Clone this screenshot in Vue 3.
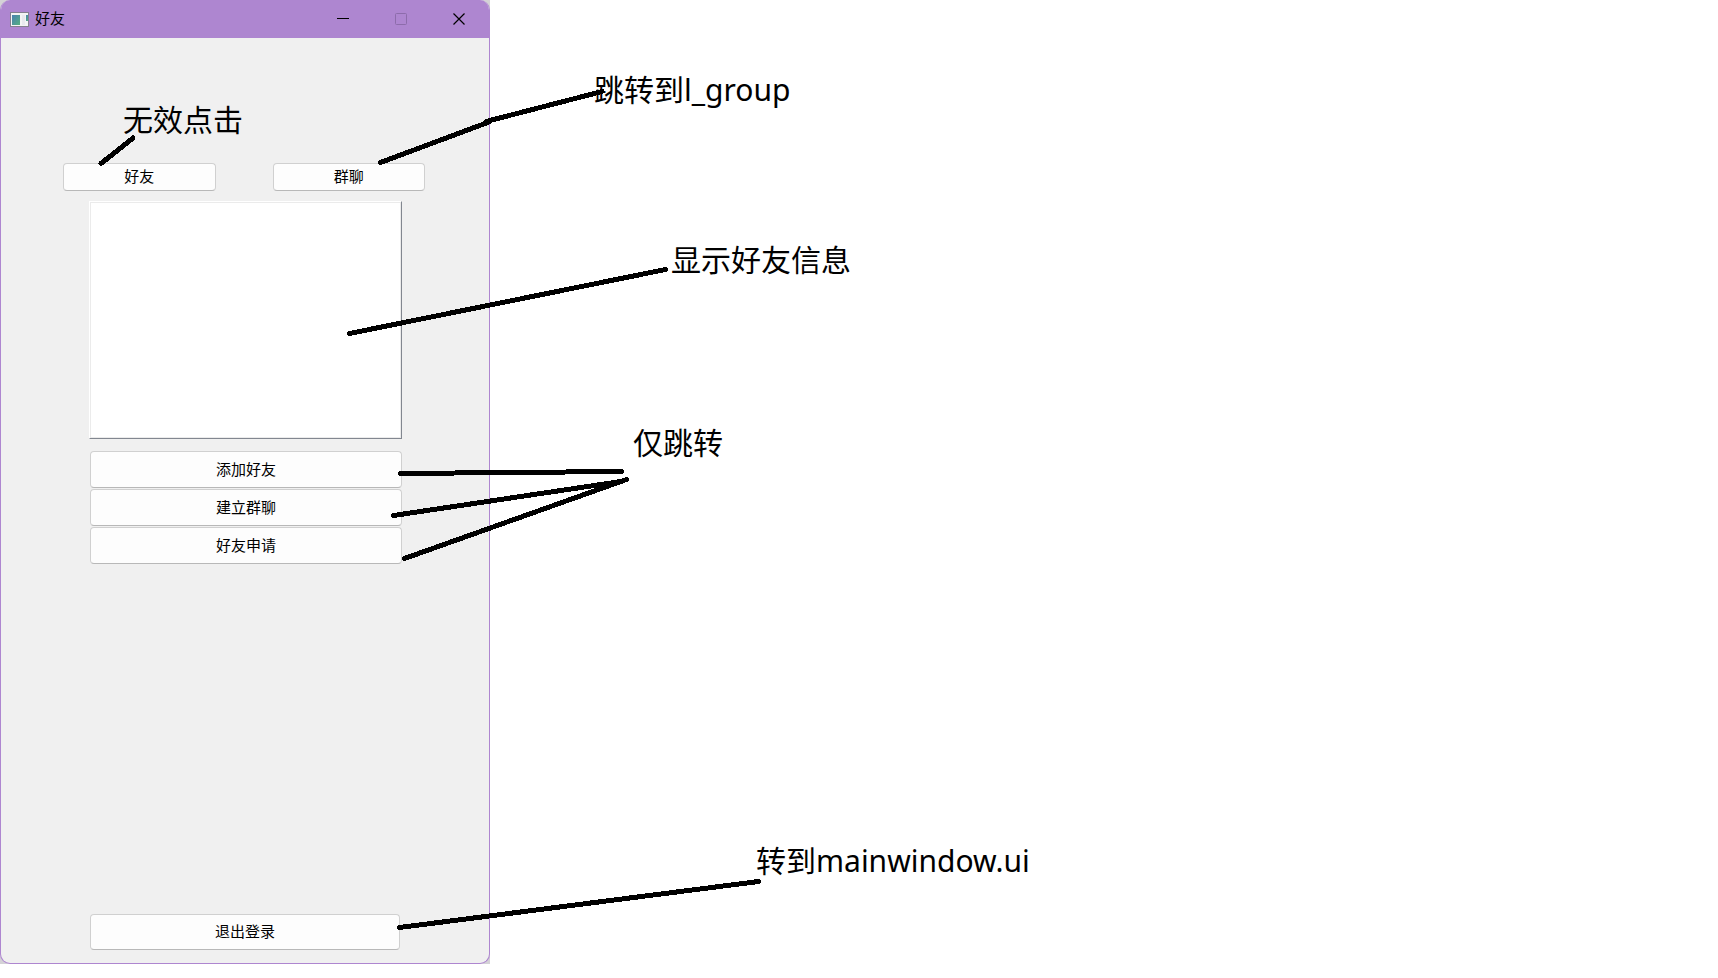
<script setup>
const notes = [
  { text: '无效点击', x: 123, y: 98 },
  { text: '跳转到l_group', x: 594, y: 68 },
  { text: '显示好友信息', x: 671, y: 238 },
  { text: '仅跳转', x: 633, y: 421 },
  { text: '转到mainwindow.ui', x: 756, y: 839 },
]

const strokes = [
  'M101 163.5 L133 138',
  'M380.5 162.5 L489 122',
  'M486 121.5 L602 91.5',
  'M349.5 333.5 L665.5 269.5',
  'M400.5 473.5 L621.5 471.5',
  'M393.5 515.5 L621 481.5',
  'M404.5 558.5 L626.5 479.5',
  'M399.5 927.5 L758.5 881.5',
]

const actions = ['添加好友', '建立群聊', '好友申请']
</script>

<template>
  <main class="board">
    <div class="backdrop">
      <section class="window">
        <header class="titlebar">
          <svg class="app-icon" viewBox="0 0 19 15" aria-hidden="true">
            <defs>
              <linearGradient id="pane" x1="0" y1="0" x2="1" y2="1">
                <stop offset="0" stop-color="#4a80b0" />
                <stop offset="1" stop-color="#55b080" />
              </linearGradient>
            </defs>
            <rect x="0.5" y="0.5" width="18" height="14" fill="#f4f4f4" stroke="#85808f" />
            <rect x="2" y="3" width="8" height="10" fill="url(#pane)" />
            <rect x="12" y="3" width="3" height="10" fill="#e9e9ee" />
            <rect x="16" y="3" width="2" height="6" fill="url(#pane)" />
          </svg>
          <h1 class="title">好友</h1>
          <button class="control" type="button" aria-label="最小化">
            <svg viewBox="0 0 12 12"><path d="M0 5.5H12" stroke="#000" /></svg>
          </button>
          <button class="control" type="button" aria-label="最大化" disabled>
            <svg viewBox="0 0 12 12"><rect x="0.5" y="0.5" width="11" height="11" rx="1" fill="none" stroke="#8d6cab" /></svg>
          </button>
          <button class="control" type="button" aria-label="关闭">
            <svg viewBox="0 0 12 12"><path d="M0.5 0.5L11.5 11.5M11.5 0.5L0.5 11.5" stroke="#000" stroke-width="1.2" /></svg>
          </button>
        </header>
        <div class="content">
          <nav class="tabs">
            <button class="push" type="button">好友</button>
            <button class="push" type="button">群聊</button>
          </nav>
          <div class="list" role="listbox" aria-label="好友"></div>
          <div class="actions">
            <button v-for="label in actions" :key="label" class="push tall" type="button">{{ label }}</button>
          </div>
          <button class="push logout" type="button">退出登录</button>
        </div>
      </section>
    </div>

    <svg class="strokes" aria-hidden="true">
      <path v-for="d in strokes" :key="d" :d="d" />
    </svg>
    <p v-for="n in notes" :key="n.text" class="note" :style="{ left: n.x + 'px', top: n.y + 'px' }">{{ n.text }}</p>
  </main>
</template>

<style>
body {
  margin: 0;
  background: #fff;
}
</style>

<style scoped>
.board {
  position: relative;
  min-height: 100vh;
  font-family: "Noto Sans", "Noto Sans CJK SC", sans-serif;
  color: #000;
}
.backdrop {
  max-width: 490px;
  background: #d4d2d6;
}
.window {
  display: flex;
  flex-direction: column;
  box-sizing: border-box;
  min-height: calc(100vh - 14px);
  border: 1px solid #ae86d0;
  border-top: 0;
  border-radius: 10px;
  background: #f0f0f0;
  overflow: hidden;
}
.titlebar {
  display: flex;
  align-items: center;
  height: 38px;
  padding: 0 1px 0 9px;
  background: #ae86d0;
}
.app-icon {
  width: 19px;
  height: 15px;
}
.title {
  flex: 1;
  margin: 0 0 0 6px;
  padding-bottom: 2px;
  font-family: "Noto Sans CJK SC", sans-serif;
  font-size: 15px;
  font-weight: 400;
  line-height: 20px;
}
.control {
  display: flex;
  align-items: center;
  justify-content: center;
  width: 58px;
  height: 38px;
  padding: 0;
  border: 0;
  background: transparent;
}
.control svg {
  width: 12px;
  height: 12px;
}
.content {
  flex: 1;
  display: flex;
  flex-direction: column;
  padding: 125px 64px 13px 62px;
}
.tabs {
  display: flex;
  gap: 57px;
}
.tabs .push {
  flex: 1;
}
.push {
  height: 28px;
  padding: 0 0 2px;
  border: 1px solid #d0d0d0;
  border-bottom-color: #b8b8b8;
  border-radius: 4px;
  background: #fdfdfd;
  color: #000;
  font-family: "Noto Sans CJK SC", sans-serif;
  font-size: 15px;
  line-height: 20px;
}
.list {
  box-sizing: border-box;
  height: 238px;
  margin: 10px 23px 0 26px;
  border: 1px solid #828790;
  border-top-color: #fff;
  border-left-color: #fff;
  background: #fff;
  box-shadow: inset 1px 1px #ebebeb, inset -1px -1px #ebebeb;
}
.actions {
  display: flex;
  flex-direction: column;
  gap: 1px;
  margin: 12px 23px 0 27px;
}
.tall {
  height: 37px;
}
.logout {
  height: 36px;
  margin: auto 25px 0 27px;
}
.strokes {
  position: absolute;
  inset: 0;
  width: 100%;
  height: 100%;
  pointer-events: none;
}
.strokes path {
  fill: none;
  stroke: #000;
  stroke-width: 5;
  stroke-linecap: round;
  shape-rendering: crispEdges;
}
.note {
  position: absolute;
  margin: 0;
  font-size: 30px;
  line-height: 44px;
  white-space: nowrap;
}
</style>
